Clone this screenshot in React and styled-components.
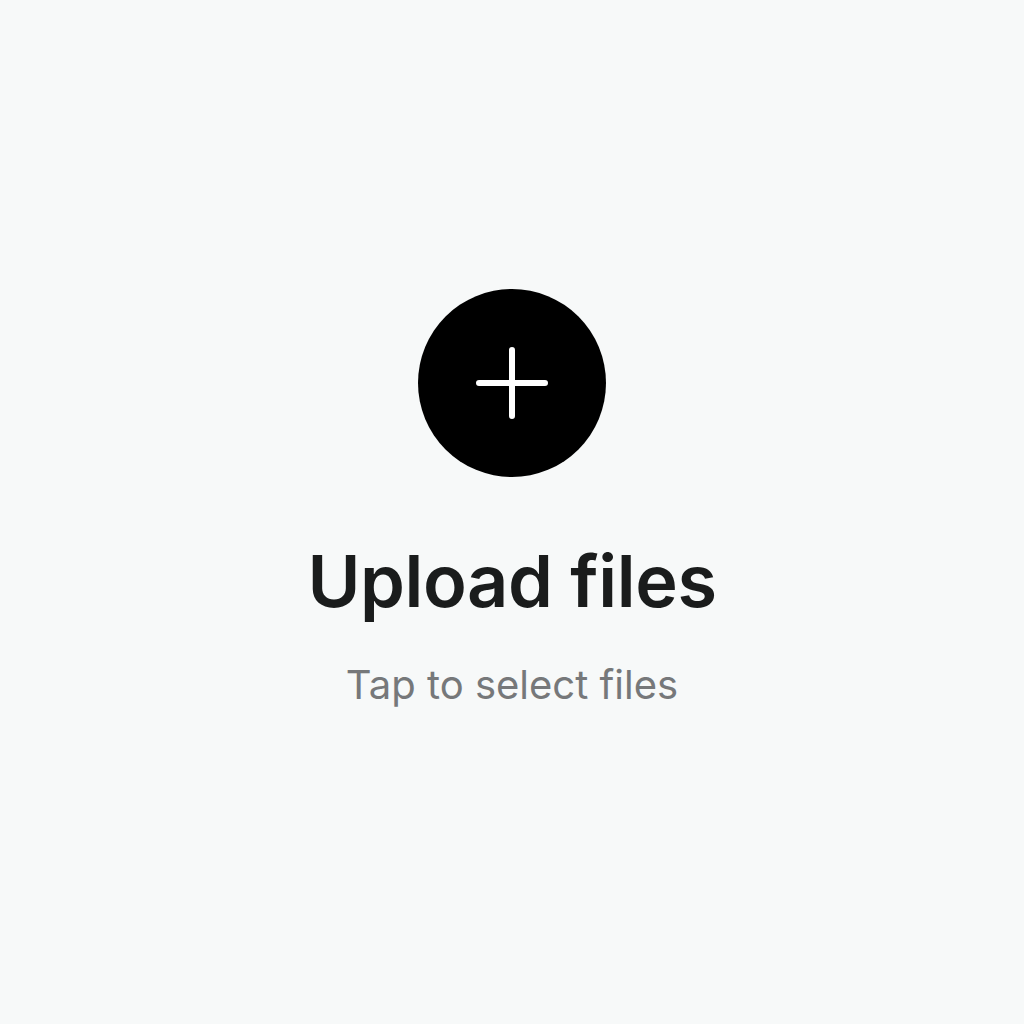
import React from 'react';
import styled, { createGlobalStyle } from 'styled-components';

const GlobalStyle = createGlobalStyle`
  html, body {
    margin: 0;
    padding: 0;
    background: #f7f9f9;
  }
  body {
    font-family: Inter, "Liberation Sans", sans-serif;
  }
`;

const Screen = styled.div`
  width: 1024px;
  height: 1024px;
  display: flex;
  flex-direction: column;
  align-items: center;
  padding-top: 289px;
  box-sizing: border-box;
`;

const AddButton = styled.button`
  width: 188px;
  height: 188px;
  border-radius: 50%;
  border: none;
  background: #000000;
  display: flex;
  align-items: center;
  justify-content: center;
  padding: 0;
  cursor: pointer;
`;

const Title = styled.h1`
  margin: 59px 0 0;
  font-size: 72px;
  font-weight: 600;
  line-height: 90px;
  letter-spacing: -0.4px;
  color: #1a1c1c;
`;

const Subtitle = styled.p`
  margin: 34px 0 0;
  font-size: 40px;
  font-weight: 400;
  line-height: 50px;
  color: #76787a;
`;

function PlusIcon() {
  return (
    <svg width="76" height="76" viewBox="0 0 76 76" fill="none">
      <path d="M38 5V71M5 38H71" stroke="#ffffff" strokeWidth="6" strokeLinecap="round" />
    </svg>
  );
}

function App() {
  return (
    <>
      <GlobalStyle />
      <Screen>
        <AddButton aria-label="Upload files">
          <PlusIcon />
        </AddButton>
        <Title>Upload files</Title>
        <Subtitle>Tap to select files</Subtitle>
      </Screen>
    </>
  );
}

export default App;
